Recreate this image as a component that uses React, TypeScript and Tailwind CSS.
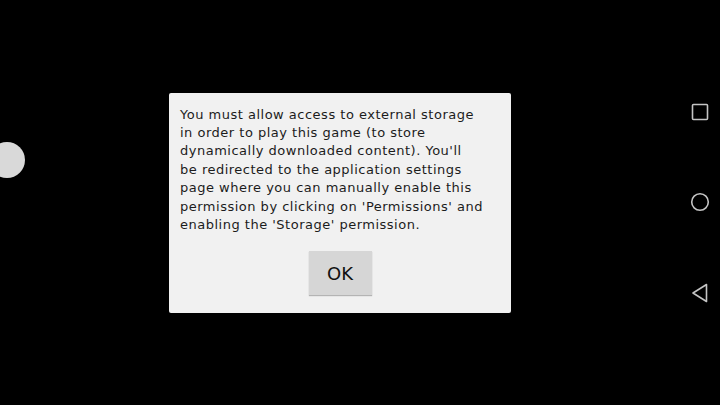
import React from "react";

const lines = [
  "You must allow access to external storage",
  "in order to play this game (to store",
  "dynamically downloaded content). You'll",
  "be redirected to the application settings",
  "page where you can manually enable this",
  "permission by clicking on 'Permissions' and",
  "enabling the 'Storage' permission.",
];

export default function App() {
  return (
    <div className="relative w-[720px] h-[405px] bg-black flex overflow-hidden">
      <div className="absolute left-[-11px] top-[142px] w-[36px] h-[36px] rounded-full bg-[#d9d9d9]" />
      <div className="flex-1 flex items-center justify-center">
        <div className="w-[342px] h-[220px] bg-[#f1f1f1] rounded-[2px] flex flex-col pt-[13px] pl-[11px] pr-[8px]">
          <div
            className="text-[#1c1c1c] text-[13px] leading-[18.4px] tracking-[0.5px]"
            style={{ fontFamily: '"DejaVu Sans", sans-serif' }}
          >
            {lines.map((l, i) => (
              <div key={i} className="whitespace-nowrap">
                {l}
              </div>
            ))}
          </div>
          <div className="flex justify-center mt-[17px] pr-[3px]">
            <div
              className="w-[63px] h-[44px] bg-[#d6d6d6] shadow-[0_1px_1px_rgba(0,0,0,0.25)] flex items-center justify-center text-[#111] text-[18px]"
              style={{ fontFamily: '"DejaVu Sans", sans-serif' }}
            >
              OK
            </div>
          </div>
        </div>
      </div>
      <div className="w-[40px] flex flex-col items-center justify-between pt-[103px] pb-[102px]">
        <svg width="18" height="18" viewBox="0 0 18 18">
          <rect x="1.5" y="1.5" width="15" height="15" rx="1" fill="none" stroke="#c4c4c4" strokeWidth="1.6" />
        </svg>
        <svg width="20" height="20" viewBox="0 0 20 20">
          <circle cx="10" cy="10" r="8.3" fill="none" stroke="#c4c4c4" strokeWidth="1.6" />
        </svg>
        <svg width="18" height="20" viewBox="0 0 18 20">
          <path d="M15.5 1.5 L2 10 L15.5 18.5 Z" fill="none" stroke="#c4c4c4" strokeWidth="1.6" strokeLinejoin="round" />
        </svg>
      </div>
    </div>
  );
}
